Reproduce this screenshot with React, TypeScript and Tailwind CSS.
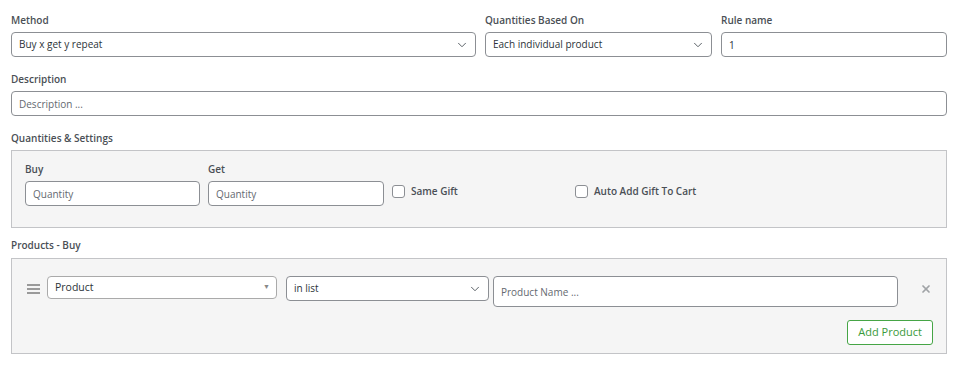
import { ChevronDown, X } from "lucide-react";

function Label({ children, className = "" }: { children: React.ReactNode; className?: string }) {
  return <div className={"text-[10px] leading-[15px] font-semibold text-[#4a4f55] " + className}>{children}</div>;
}

function Select({ value, className = "" }: { value: string; className?: string }) {
  return (
    <div className={"flex items-center justify-between h-[25px] bg-white border border-[#8c8f94] rounded-[4px] pl-[7px] pr-[6px] text-[10px] text-[#2c3338] " + className}>
      <span>{value}</span>
      <ChevronDown className="w-[14px] h-[14px] text-[#50575e]" strokeWidth={1.6} />
    </div>
  );
}

function Input({ placeholder, value, className = "" }: { placeholder?: string; value?: string; className?: string }) {
  return (
    <input
      readOnly
      value={value}
      placeholder={placeholder}
      className={"block h-[25px] bg-white border border-[#8c8f94] rounded-[4px] px-[7px] text-[10px] text-[#2c3338] placeholder:text-[#646970] outline-none " + className}
    />
  );
}

function Check({ label }: { label: string }) {
  return (
    <label className="flex items-center gap-[6px] mt-[3px]">
      <span className="w-[13px] h-[13px] border border-[#8c8f94] rounded-[3px] bg-white" />
      <span className="text-[10px] font-semibold text-[#4a4f55]">{label}</span>
    </label>
  );
}

export default function App() {
  return (
    <div className="w-[958px] h-[367px] bg-white px-[11px] pt-[13px] font-['Open_Sans',sans-serif]">
      {/* Top row */}
      <div className="flex gap-[9px]">
        <div className="w-[465px]">
          <Label className="mb-[4px]">Method</Label>
          <Select value="Buy x get y repeat" />
        </div>
        <div className="w-[227px]">
          <Label className="mb-[4px]">Quantities Based On</Label>
          <Select value="Each individual product" />
        </div>
        <div className="flex-1">
          <Label className="mb-[4px]">Rule name</Label>
          <Input value="1" className="w-full" />
        </div>
      </div>

      <Label className="mt-[15px] mb-[4px]">Description</Label>
      <Input placeholder="Description ..." className="w-full" />

      <Label className="mt-[15px] mb-[4px]">Quantities &amp; Settings</Label>
      <div className="border border-[#c3c4c7] bg-[#f5f5f5] pl-[13px] pt-[11px] pb-[21px] flex items-start gap-[8px]">
        <div>
          <Label className="mb-[4px]">Buy</Label>
          <Input placeholder="Quantity" className="w-[175px]" />
        </div>
        <div>
          <Label className="mb-[4px]">Get</Label>
          <Input placeholder="Quantity" className="w-[176px]" />
        </div>
        <div className="flex items-center pt-[19px]">
          <div className="w-[183px]">
            <Check label="Same Gift" />
          </div>
          <Check label="Auto Add Gift To Cart" />
        </div>
      </div>

      <Label className="mt-[10px] mb-[5px]">Products - Buy</Label>
      <div className="border border-[#c3c4c7] bg-[#f5f5f5] pl-[15px] pr-[13px] pt-[17px] pb-[8px]">
        <div className="flex items-start">
          <div className="flex flex-col gap-[2px] w-[13px] mt-[8px] mr-[7px]">
            <span className="h-[2px] bg-[#9a9a9a]" />
            <span className="h-[2px] bg-[#9a9a9a]" />
            <span className="h-[2px] bg-[#9a9a9a]" />
          </div>
          <div className="flex items-center justify-between w-[230px] h-[23px] bg-white border border-[#aaa] rounded-[4px] pl-[7px] pr-[6px] text-[10.5px] text-[#2c3338]">
            <span>Product</span>
            <span className="text-[#888] text-[7px]">▼</span>
          </div>
          <Select value="in list" className="w-[203px] ml-[9px]" />
          <Input placeholder="Product Name ..." className="w-[405px] h-[31px] ml-[4px]" />
          <X className="w-[12px] h-[12px] text-[#a0a3a6] ml-[22px] mt-[7px]" strokeWidth={3.5} />
        </div>
        <div className="flex justify-end mt-[13px]">
          <button className="h-[25px] px-[10px] bg-white border border-[#46a546] rounded-[3px] text-[11px] text-[#3a9a3a]">
            Add Product
          </button>
        </div>
      </div>
    </div>
  );
}
